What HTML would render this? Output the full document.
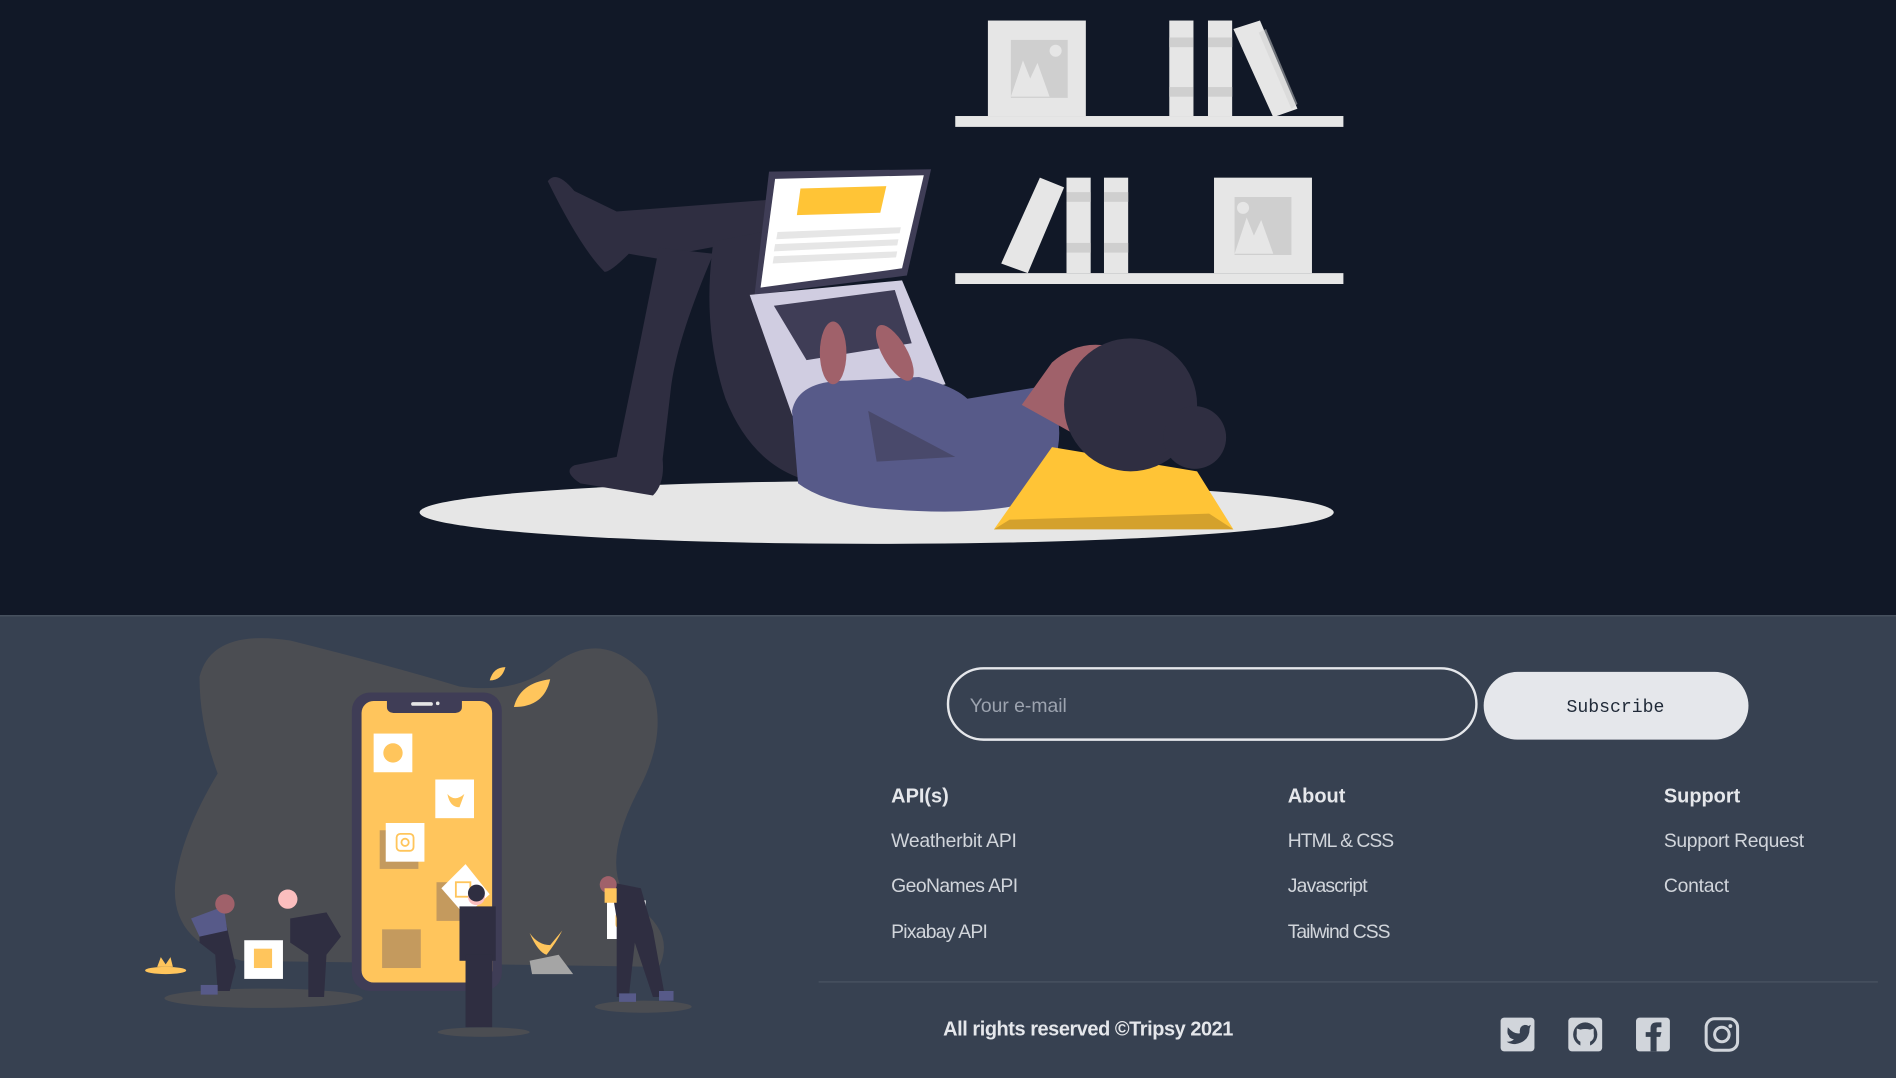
<!DOCTYPE html>
<html><head><meta charset="utf-8"><style>
html,body{margin:0;padding:0;width:1896px;height:1078px;overflow:hidden;background:#111827}
svg{display:block}
text{font-family:"Liberation Sans",sans-serif}
</style></head><body>
<svg width="1896" height="1078" viewBox="0 0 1568 892" preserveAspectRatio="none" xmlns="http://www.w3.org/2000/svg">
<rect width="1568" height="509" fill="#111827"/>
<rect y="509" width="1568" height="383" fill="#374151"/>
<rect y="509" width="1568" height="1" fill="#4b5563"/>

<!-- shelves -->
<g fill="#e6e6e6">
<rect x="790" y="96" width="321" height="9"/>
<rect x="817" y="17" width="81" height="79"/>
<rect x="967" y="17" width="20" height="79"/>
<rect x="999" y="17" width="20" height="79"/>
<polygon points="1020,24 1042,17 1073,90 1053,97"/>
<rect x="790" y="226" width="321" height="9"/>
<polygon points="828,218 860,147 880,155 850,226"/>
<rect x="882" y="147" width="20" height="79"/>
<rect x="913" y="147" width="20" height="79"/>
<rect x="1004" y="147" width="81" height="79"/>
</g>
<g fill="#cfcfcf">
<rect x="836" y="33" width="47" height="48"/>
<rect x="967" y="31" width="20" height="8"/><rect x="967" y="72" width="20" height="8"/>
<rect x="999" y="31" width="20" height="8"/><rect x="999" y="72" width="20" height="8"/>
<rect x="882" y="159" width="20" height="8"/><rect x="882" y="201" width="20" height="8"/>
<rect x="913" y="159" width="20" height="8"/><rect x="913" y="201" width="20" height="8"/>
<rect x="1021" y="163" width="47" height="48"/>
<polygon points="1041,27 1047,24 1073,86 1068,90" opacity=".5"/>
</g>
<g fill="#e6e6e6">
<polygon points="836,80 846,50 852,65 858,52 868,80"/>
<circle cx="873" cy="42" r="5"/>
<polygon points="1021,210 1031,180 1037,195 1043,182 1053,210"/>
<circle cx="1028" cy="172" r="5"/>
</g>

<!-- floor -->
<ellipse cx="725" cy="424" rx="378" ry="26" fill="#e6e6e6"/>

<!-- legs -->
<g fill="#2f2e41">
<path d="M453,150 Q460,140 475,158 L510,175 L640,165 L640,195 L560,210 L550,215 L520,210 Q505,225 500,225 Q480,205 453,150Z"/>
<path d="M545,205 L590,210 Q560,280 555,320 L548,380 Q550,400 540,410 L480,400 Q465,390 475,385 L510,378 L530,280 Z"/>
<path d="M590,200 L640,190 L660,395 Q620,380 600,330 Q580,270 590,200Z"/>
</g>
<!-- laptop -->
<polygon points="636,142 770,140 750,228 624,244" fill="#3f3d56"/>
<polygon points="641,148 764,145 746,222 629,238" fill="#ffffff"/>
<polygon points="662,156 733,154 728,176 659,178" fill="#ffc436"/>
<g fill="#e6e6e6"><polygon points="643,192 745,188 744,193 642,198"/><polygon points="641,202 743,198 742,203 640,208"/><polygon points="640,212 742,208 741,213 639,218"/></g>
<polygon points="620,244 746,232 782,318 656,346" fill="#d0cde1"/>
<polygon points="640,253 740,240 754,284 667,298" fill="#3f3d56"/>
<!-- body -->
<path d="M655,340 Q660,315 700,315 L760,312 Q790,320 800,330 L860,320 Q880,340 875,370 L870,410 Q820,430 720,420 Q680,415 660,400Z" fill="#575a89"/>
<path d="M718,340 L725,382 L790,378 Z" fill="#3f3d56" opacity=".6"/>
<g fill="#a0616a">
<ellipse cx="689" cy="292" rx="11" ry="26"/>
<ellipse cx="740" cy="292" rx="10" ry="26" transform="rotate(-30 740 292)"/>
<path d="M870,300 Q890,282 915,286 L890,360 L845,335Z"/>
</g>
<polygon points="822,438 870,370 990,390 1020,438 930,430" fill="#ffc436"/>
<polygon points="822,438 1020,438 1000,425 835,430" fill="#d4a12c"/>
<circle cx="935" cy="335" r="55" fill="#2f2e41"/>
<circle cx="988" cy="362" r="26" fill="#2f2e41"/>

<!-- footer illustration -->
<path d="M165,560 Q175,520 240,530 Q320,550 380,568 Q430,575 460,548 Q500,520 535,560 Q555,600 530,650 Q495,715 520,745 Q560,770 545,800 L200,795 Q140,780 145,730 Q150,690 180,640 Q165,600 165,560Z" fill="#4b4d52"/>
<ellipse cx="218" cy="826" rx="82" ry="8" fill="#4b4d52"/>
<ellipse cx="400" cy="854" rx="38" ry="4" fill="#4b4d52"/>
<ellipse cx="532" cy="833" rx="40" ry="5" fill="#4b4d52"/>
<rect x="291" y="573" width="124" height="247" rx="15" fill="#3f3d56"/>
<rect x="299" y="580" width="108" height="233" rx="10" fill="#ffc55c"/>
<path d="M320,580 L382,580 L382,585 Q382,590 375,590 L327,590 Q320,590 320,585Z" fill="#3f3d56"/>
<rect x="340" y="581" width="18" height="3" rx="1.5" fill="#e6e6e6"/>
<circle cx="362" cy="582" r="1.5" fill="#e6e6e6"/>
<rect x="316" y="769" width="32" height="32" fill="#c49a5e"/>
<rect x="314" y="687" width="32" height="32" fill="#c49a5e"/>
<rect x="361" y="730" width="32" height="32" fill="#c49a5e"/>
<g fill="#fff">
<rect x="309" y="607" width="32" height="32"/>
<rect x="360" y="645" width="32" height="32"/>
<rect x="319" y="681" width="32" height="32"/>
<rect x="202" y="778" width="32" height="32"/>
<rect x="502" y="745" width="32" height="32"/>
<polygon points="365,735 385,715 405,740 385,758"/>
</g>
<circle cx="325" cy="623" r="8" fill="#ffc55c"/>
<path d="M370,657 Q376,664 384,657 L380,668 Q372,668 370,657Z" fill="#ffc55c"/>
<rect x="328" y="690" width="14" height="14" rx="3" fill="none" stroke="#ffc55c" stroke-width="1.5"/>
<circle cx="335" cy="697" r="3" fill="none" stroke="#ffc55c" stroke-width="1.5"/>
<rect x="210" y="785" width="15" height="16" fill="#ffc55c"/>
<rect x="509" y="755" width="18" height="13" rx="3" fill="#ffc55c"/>
<polygon points="516,758 522,761.5 516,765" fill="#fff"/>
<rect x="377" y="730" width="12" height="12" fill="none" stroke="#ffc55c" stroke-width="1.5"/>
<!-- leaves and plants -->
<path d="M425,585 Q430,565 455,562 Q450,585 425,585Z" fill="#ffc55c"/>
<path d="M405,563 Q408,552 418,552 Q415,563 405,563Z" fill="#ffc55c"/>
<ellipse cx="137" cy="803" rx="17" ry="3" fill="#ffc55c"/>
<path d="M130,800 L133,792 L137,798 L141,792 L143,800Z" fill="#ffc55c"/>
<path d="M438,772 Q445,788 452,790 Q460,780 465,770 L455,782 Q445,782 438,772Z" fill="#ffc55c"/>
<polygon points="438,795 462,790 474,806 440,806" fill="#a5a5a5"/>
<!-- people -->
<g fill="#2f2e41">
<path d="M165,760 L185,755 L195,800 L190,820 L180,820 L178,790 L165,780Z" />
<path d="M240,760 L270,755 L282,775 L270,790 L268,825 L255,825 L255,790 L240,780Z"/>
<rect x="380" y="750" width="30" height="45"/>
<rect x="385" y="790" width="22" height="60"/>
<path d="M505,730 L530,735 L540,770 L550,825 L540,825 L525,780 L520,825 L510,825 L510,760Z"/>
</g>
<g fill="#575a89">
<polygon points="158,760 185,750 188,770 165,775"/>
<rect x="166" y="815" width="14" height="8"/>
<rect x="512" y="822" width="14" height="7"/>
<rect x="545" y="820" width="12" height="8"/>
</g>
<g fill="#a0616a"><circle cx="186" cy="748" r="8"/><circle cx="503" cy="732" r="7"/></g>
<g fill="#fbbebe"><circle cx="238" cy="744" r="8"/><circle cx="394" cy="742" r="7"/></g>
<circle cx="394" cy="739" r="7" fill="#2f2e41"/>
<rect x="500" y="735" width="10" height="12" fill="#ffc55c"/>

<!-- subscribe -->
<rect x="784" y="553" width="437" height="59" rx="29.5" fill="none" stroke="#e5e7eb" stroke-width="2"/>
<text x="802" y="589" font-size="16" fill="#9ca3af">Your e-mail</text>
<rect x="1227" y="556" width="219" height="56" rx="28" fill="#e5e7eb"/>
<text x="1336" y="589" font-size="15" fill="#1f2937" text-anchor="middle" style="font-family:'Liberation Mono',monospace">Subscribe</text>

<!-- columns -->
<g font-size="16.5" font-weight="bold" fill="#e5e7eb">
<text x="737" y="664">API(s)</text>
<text x="1065" y="664">About</text>
<text x="1376" y="664">Support</text>
</g>
<g font-size="16" fill="#d1d5db">
<text x="737" y="701" textLength="104">Weatherbit API</text>
<text x="737" y="738" textLength="105">GeoNames API</text>
<text x="737" y="776" textLength="80">Pixabay API</text>
<text x="1065" y="701" textLength="88">HTML &amp; CSS</text>
<text x="1065" y="738" textLength="66">Javascript</text>
<text x="1065" y="776" textLength="85">Tailwind CSS</text>
<text x="1376" y="701" textLength="116">Support Request</text>
<text x="1376" y="738" textLength="54">Contact</text>
</g>
<rect x="677" y="812" width="876" height="1" fill="#4b5563"/>
<text x="780" y="857" font-size="16.5" font-weight="bold" fill="#e5e7eb" textLength="240">All rights reserved ©Tripsy 2021</text>

<!-- social icons -->
<g>
<rect x="1241" y="842" width="28" height="28" rx="3" fill="#d1d5db"/>
<path d="M1247,850 Q1252,856 1257,855 Q1256,849 1261,848 Q1263,848 1264,849 L1266,848 L1265,851 Q1265,862 1253,864 Q1249,864 1246,862 Q1250,862 1252,860 Q1248,859 1248,857 Q1246,856 1247,850Z" fill="#374151"/>
<rect x="1297" y="842" width="28" height="28" rx="3" fill="#d1d5db"/>
<circle cx="1311" cy="856" r="10" fill="#374151"/>
<path d="M1307,868 L1307,862 Q1303,860 1304,855 L1304,851 L1307,852 Q1311,851 1315,852 L1318,851 L1318,855 Q1319,860 1315,862 L1315,868Z" fill="#d1d5db"/>
<rect x="1353" y="842" width="28" height="28" rx="3" fill="#d1d5db"/>
<path d="M1365,870 L1365,858 L1361,858 L1361,854 L1365,854 L1365,851 Q1365,846 1370,846 L1374,846 L1374,850 L1371,850 Q1370,850 1370,851 L1370,854 L1374,854 L1373,858 L1370,858 L1370,870Z" fill="#374151"/>
<rect x="1411" y="843" width="26" height="26" rx="7" fill="none" stroke="#d1d5db" stroke-width="2.5"/>
<circle cx="1424" cy="856" r="6" fill="none" stroke="#d1d5db" stroke-width="2.5"/>
<circle cx="1431" cy="849" r="1.6" fill="#d1d5db"/>
</g>
</svg>
</body></html>
